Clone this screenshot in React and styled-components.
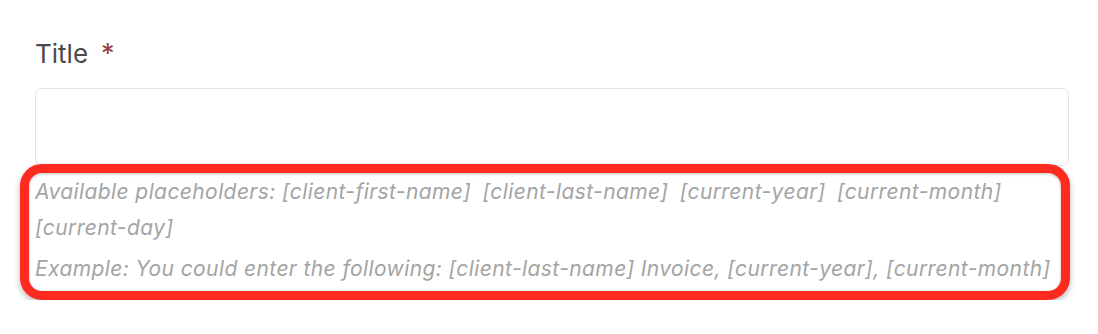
import styled, { createGlobalStyle } from "styled-components";

const GlobalStyle = createGlobalStyle`
  body {
    margin: 0;
    background: #ffffff;
    font-family: Inter, "Noto Sans", sans-serif;
  }
`;

const Page = styled.div`
  padding: 38px 29px 0 35px;
  width: 1034px;
`;

const Label = styled.label`
  display: flex;
  align-items: baseline;
  gap: 13px;
  font-size: 26px;
  line-height: 32px;
  color: #4b4b4b;
`;

const Required = styled.span`
  color: #9a3d3d;
  font-size: 27px;
`;

const Input = styled.input`
  display: block;
  box-sizing: border-box;
  width: 100%;
  height: 78px;
  margin-top: 18px;
  border: 1.5px solid #e1e5ea;
  border-radius: 7px;
  background: #ffffff;
  outline: none;
`;

// red annotation frame around the help text
const Highlight = styled.div`
  position: relative;
  margin: -2px -1px 0 -15px;
  border: 9px solid #ff2a1f;
  border-radius: 22px;
  padding: 1px 0 4px 6px;
  box-shadow: 0 3px 6px rgba(0, 0, 0, 0.28),
    inset 0 1px 3px rgba(0, 0, 0, 0.25);
  background: #ffffff;
`;

const Help = styled.p`
  margin: 0;
  font-size: 21px;
  letter-spacing: 0.4px;
  line-height: 36px;
  font-style: italic;
  color: #a4a4a4;
  & + & {
    margin-top: 5px;
  }
`;

const Placeholder = styled.span`
  white-space: nowrap;
  margin-right: 5px;
`;

const placeholders = [
  "[client-first-name]",
  "[client-last-name]",
  "[current-year]",
  "[current-month]",
  "[current-day]",
];

const App = () => {
  return (
    <>
      <GlobalStyle />
      <Page>
        <Label>
          Title <Required>*</Required>
        </Label>
        <Input type="text" />
        <Highlight>
          <Help>
            Available placeholders:{" "}
            {placeholders.map((p) => (
              <span key={p}>
                <Placeholder>{p}</Placeholder>{" "}
              </span>
            ))}
          </Help>
          <Help>
            Example: You could enter the following: [client-last-name] Invoice,
            [current-year], [current-month]
          </Help>
        </Highlight>
      </Page>
    </>
  );
};

export default App;
